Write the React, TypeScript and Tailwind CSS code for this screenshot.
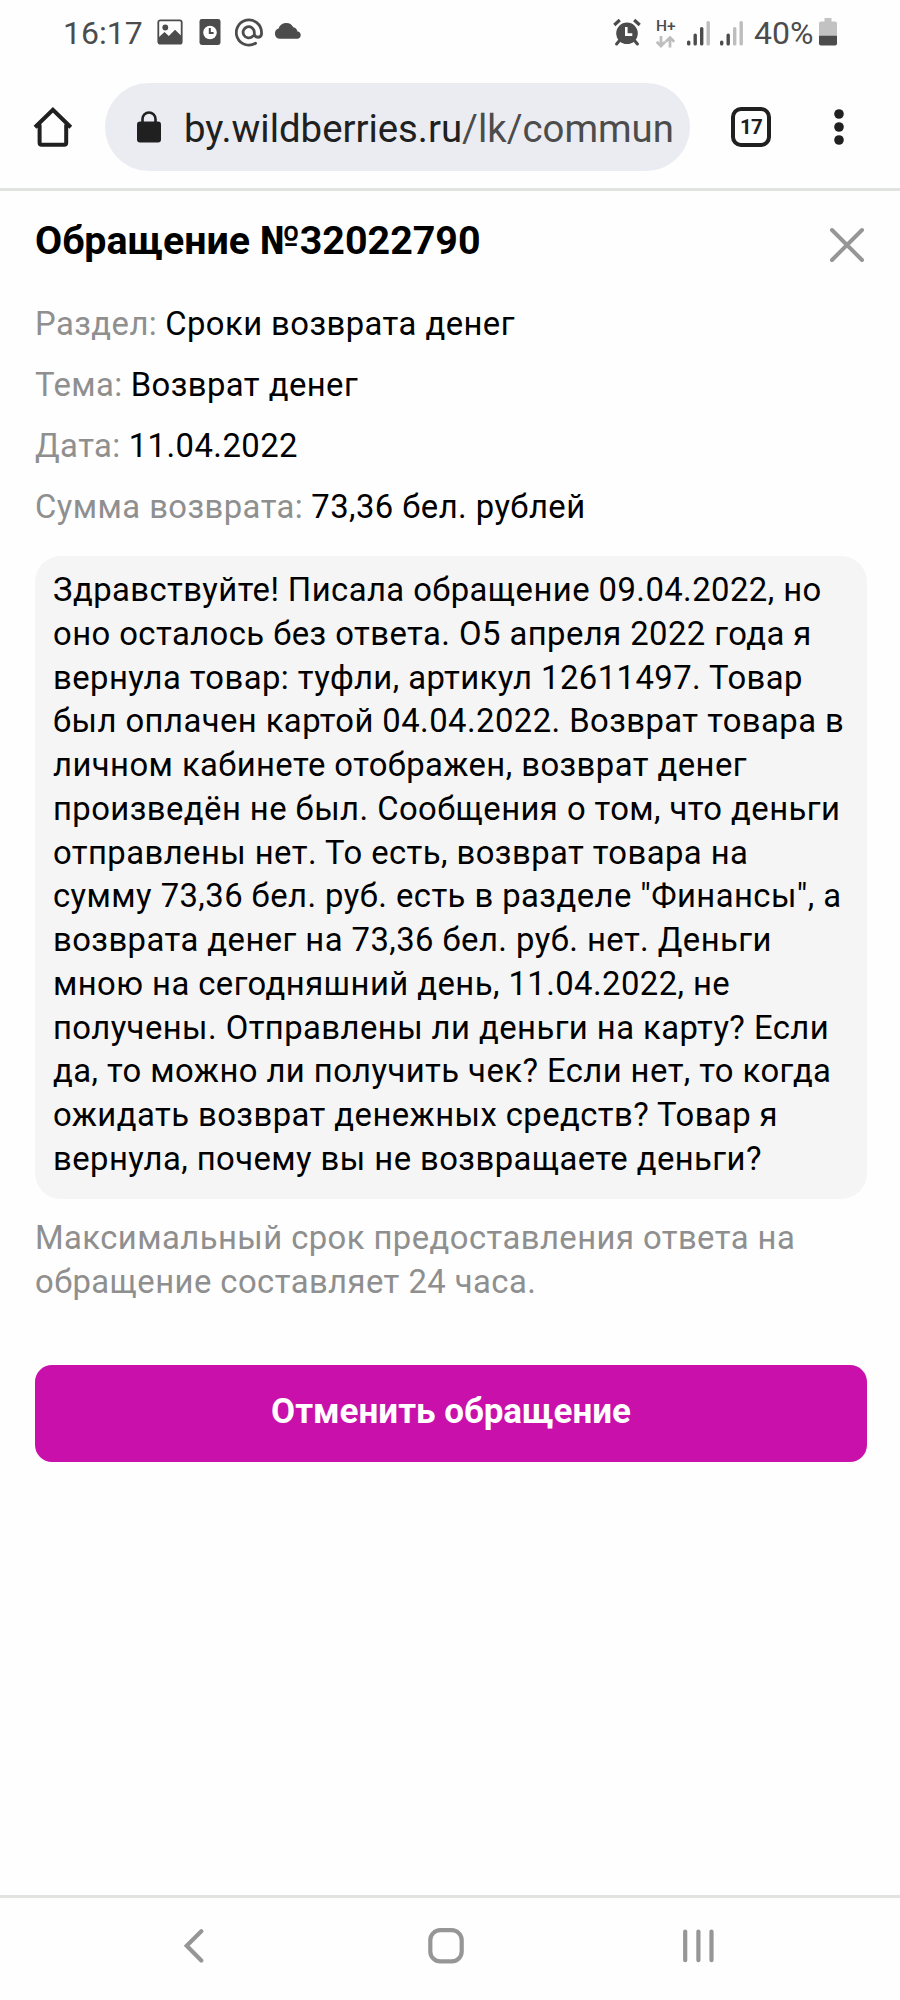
import type { ReactNode } from 'react'

const details = [
  { label: 'Раздел:', value: 'Сроки возврата денег' },
  { label: 'Тема:', value: 'Возврат денег' },
  { label: 'Дата:', value: '11.04.2022' },
  { label: 'Сумма возврата:', value: '73,36 бел. рублей' },
]

const messageLines = [
  'Здравствуйте! Писала обращение 09.04.2022, но',
  'оно осталось без ответа. О5 апреля 2022 года я',
  'вернула товар: туфли, артикул 12611497. Товар',
  'был оплачен картой 04.04.2022. Возврат товара в',
  'личном кабинете отображен, возврат денег',
  'произведён не был. Сообщения о том, что деньги',
  'отправлены нет. То есть, возврат товара на',
  'сумму 73,36 бел. руб. есть в разделе "Финансы", а',
  'возврата денег на 73,36 бел. руб. нет. Деньги',
  'мною на сегодняшний день, 11.04.2022, не',
  'получены. Отправлены ли деньги на карту? Если',
  'да, то можно ли получить чек? Если нет, то когда',
  'ожидать возврат денежных средств? Товар я',
  'вернула, почему вы не возвращаете деньги?',
]

function Icon({ w, h, className, children }: { w: number; h: number; className?: string; children: ReactNode }) {
  return (
    <svg width={w} height={h} viewBox={`0 0 ${w} ${h}`} fill="none" className={`shrink-0 ${className ?? ''}`}>
      {children}
    </svg>
  )
}

function Signal({ level, className }: { level: number; className?: string }) {
  const heights = [5, 12, 18.5, 24.5]
  return (
    <Icon w={24} h={26} className={className}>
      {heights.map((h, i) => (
        <rect key={h} x={i * 6.5} y={25.5 - h} width="3.4" height={h} rx="1.6" fill={i < level ? '#4c4c4c' : '#bdbdbd'} />
      ))}
    </Icon>
  )
}

function StatusBar() {
  return (
    <div className="flex h-[66px] items-start pl-[63px] text-[#4c4c4c]">
      <span className="mt-[13px] w-[94px] text-[32px] leading-[40px]">16:17</span>

      <Icon w={26} h={26} className="mt-[19px]">
        <rect x="1.3" y="1.3" width="23.4" height="23.4" rx="2" stroke="currentColor" strokeWidth="1.8" />
        <circle cx="8.3" cy="8.5" r="2.9" fill="currentColor" />
        <path d="M1.5 18.5 7.5 13l4.3 4 6.2-6.3 6.5 6.3v7.5h-23z" fill="currentColor" />
      </Icon>
      <Icon w={22} h={26} className="ml-[16px] mt-[19px]">
        <rect x="0.5" y="0" width="21" height="26" rx="2.4" fill="currentColor" />
        <circle cx="11" cy="13.5" r="6.8" fill="#fff" />
        <path d="M10.8 9v5h3.8" stroke="currentColor" strokeWidth="2" />
      </Icon>
      <Icon w={28} h={29} className="ml-[14px] mt-[18px]">
        <path
          d="M20.600 25.200A12.600 12.600 0 1 1 26.500 14.200v2.200a3.700 3.700 0 0 1-7.200 0V14.200a5.600 5.600 0 1 0-1.600 4"
          stroke="currentColor"
          strokeWidth="2.8"
          strokeLinecap="round"
        />
      </Icon>
      <Icon w={29} h={17} className="ml-[11px] mt-[22px]">
        <path
          d="M5.3 16.7A5.2 5.2 0 0 1 4.6 6.6 8 8 0 0 1 19.3 5.2a5.4 5.4 0 0 1 4.2 4.3 3.7 3.7 0 0 1 .6 7.2z"
          fill="currentColor"
        />
      </Icon>

      <Icon w={28} h={28} className="ml-[310px] mt-[18px]">
        <circle cx="14" cy="15.3" r="10.8" fill="currentColor" />
        <path d="M6.8 2 1.3 7M21.2 2l5.5 5" stroke="currentColor" strokeWidth="3.2" />
        <path d="M6.5 22.5 3.6 26M21.5 22.5l2.9 3.5" stroke="currentColor" strokeWidth="3" strokeLinecap="round" />
        <path d="M13.3 9v7.6h6" stroke="#fff" strokeWidth="2.6" />
      </Icon>
      <div className="ml-[15px] mt-[19px] flex w-[20px] flex-col">
        <span className="h-[15px] text-[15.5px] font-medium leading-[15px]">H+</span>
        <Icon w={20} h={12} className="mt-[2px]">
          <path d="M5 0v10M.8 5.800 5 10l4.200-4.200M14 11.500v-10M9.800 5.700 14 1.500l4.200 4.200" stroke="#bdbdbd" strokeWidth="2.7" />
        </Icon>
      </div>
      <Signal level={3} className="ml-[11px] mt-[20px]" />
      <Signal level={2} className="ml-[9px] mt-[20px]" />
      <span className="ml-[10px] mt-[13px] w-[65px] text-[32px] leading-[40px]">40%</span>
      <Icon w={18} h={28} className="mt-[18px]">
        <path d="M5.5 0h7v3.6H16a2 2 0 0 1 2 2V18H0V5.600a2 2 0 0 1 2-2h3.500z" fill="#c2c2c2" />
        <path d="M0 17.800h18v7.700a2 2 0 0 1-2 2H2a2 2 0 0 1-2-2z" fill="currentColor" />
      </Icon>
    </div>
  )
}

function BrowserBar() {
  return (
    <div className="flex h-[125px] items-start border-b-[3px] border-[#e1e3df] pl-[33px] text-[#202020]">
      <Icon w={40} h={42} className="mt-[40px]">
        <path
          d="M2 21.300 19.900 3.700 37.800 21.300M6.600 18.500v18.300a2 2 0 0 0 2 2h22.600a2 2 0 0 0 2-2V18.500"
          stroke="currentColor"
          strokeWidth="4"
        />
      </Icon>

      <div className="ml-[32px] mt-[17px] flex h-[88px] w-[585px] items-center rounded-full bg-[#ebecf1] pl-[31px]">
        <Icon w={26} h={32}>
          <rect x="1" y="10.500" width="24" height="21" rx="3" fill="currentColor" />
          <path d="M6.500 12V8a6.500 6.500 0 0 1 13 0v4" stroke="currentColor" strokeWidth="2.600" />
        </Icon>
        <span className="ml-[22px] whitespace-nowrap pt-[3px] text-[38.35px] leading-[48px]">
          by.wildberries.ru<span className="text-[#4c4c4c]">/lk/commun</span>
        </span>
      </div>

      <div className="ml-[41px] mt-[41px] flex h-[40px] w-[40px] items-center justify-center rounded-[10px] border-4 border-current text-[20.5px] font-bold leading-none tracking-[-0.8px]">
        17
      </div>
      <Icon w={10} h={36} className="ml-[63px] mt-[43px]">
        <circle cx="5" cy="5" r="4.800" fill="currentColor" />
        <circle cx="5" cy="18" r="4.800" fill="currentColor" />
        <circle cx="5" cy="31" r="4.800" fill="currentColor" />
      </Icon>
    </div>
  )
}

function NavigationBar() {
  return (
    <nav className="flex h-[105px] items-start border-t-[3px] border-[#e1e3df] text-[#969696]">
      <Icon w={22} h={36} className="ml-[184px] mt-[30px]">
        <path d="M17.300 3.200 2.700 17.800l14.600 14.700" stroke="currentColor" strokeWidth="4.200" strokeLinecap="round" />
      </Icon>
      <Icon w={36} h={36} className="ml-[222px] mt-[30px]">
        <rect x="2.300" y="2.200" width="31.400" height="31.200" rx="10" stroke="currentColor" strokeWidth="4.200" />
      </Icon>
      <Icon w={32} h={36} className="ml-[219px] mt-[30px]">
        <path d="M2.200 3.500v28.700M15.400 3.500v28.700M28.500 3.500v28.700" stroke="currentColor" strokeWidth="4.200" strokeLinecap="round" />
      </Icon>
    </nav>
  )
}

export default function App() {
  return (
    <div className="flex h-[2000px] w-[900px] flex-col overflow-hidden bg-[#fefefe] font-['Roboto',sans-serif] text-black">
      <StatusBar />
      <BrowserBar />

      <main className="flex flex-1 flex-col pl-[35px] pr-[33px] text-[32.8px] tracking-[0.44px]">
        <header className="mt-[25px] flex h-[51px] items-start justify-between">
          <h1 className="text-[39.4px] font-bold leading-[50px] tracking-normal">Обращение №32022790</h1>
          <button className="mr-[2px] mt-[11px]">
            <Icon w={36} h={36}>
              <path d="M3 3l30 30M33 3 3 33" stroke="#969696" strokeWidth="4" strokeLinecap="round" />
            </Icon>
          </button>
        </header>

        <dl className="mt-[27px]">
          {details.map((item) => (
            <div key={item.label} className="flex h-[61px] gap-[8px] whitespace-nowrap leading-[61px]">
              <dt className="text-[#8f8f8f]">{item.label}</dt>
              <dd>{item.value}</dd>
            </div>
          ))}
        </dl>

        <div className="mt-[18px] h-[643px] rounded-[26px] bg-[#f5f5f5] px-[18px] pt-[13px] leading-[43.75px]">
          {messageLines.map((line) => (
            <p key={line} className="whitespace-nowrap">{line}</p>
          ))}
        </div>

        <p className="mt-[18px] whitespace-nowrap leading-[43.75px] text-[#8f8f8f]">
          Максимальный срок предоставления ответа на
          <br />
          обращение составляет 24 часа.
        </p>

        <button className="mt-[60.5px] h-[97px] rounded-[17px] bg-[#c910ab] pb-[3px] text-[35px] font-bold tracking-normal text-white">
          Отменить обращение
        </button>
      </main>

      <NavigationBar />
    </div>
  )
}
